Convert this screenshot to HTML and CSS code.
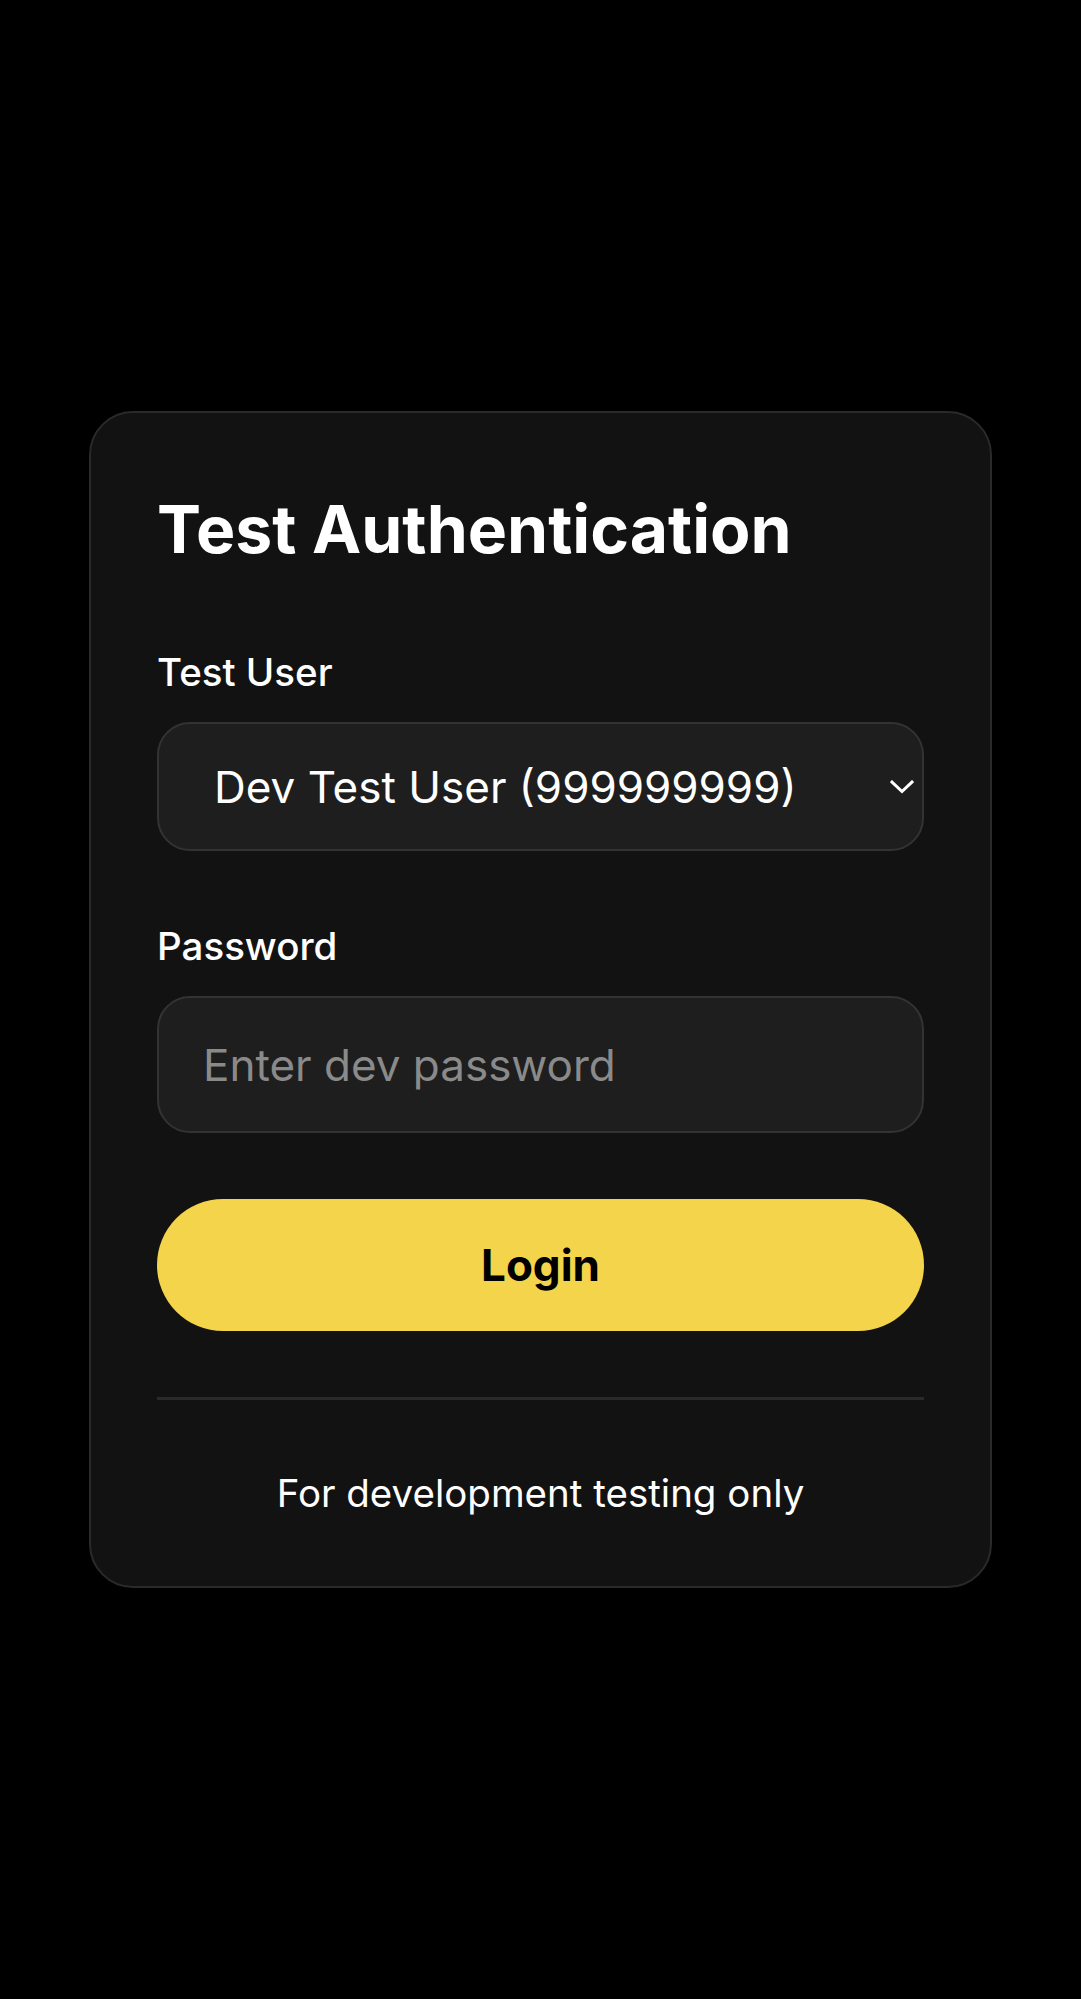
FILE: index.html
```html
<!DOCTYPE html>
<html lang="en">
<head>
<meta charset="utf-8">
<title>Test Authentication</title>
<link rel="stylesheet" href="styles.css">
</head>
<body>
<main class="card">
  <h1 class="title">Test Authentication</h1>
  <label class="label" for="user">Test User</label>
  <div class="select-wrap">
    <select id="user" class="field select">
      <option>Dev Test User (999999999)</option>
    </select>
    <svg class="chevron" width="24" height="14" viewBox="0 0 24 14" aria-hidden="true">
      <path d="M2 2 L12 11.5 L22 2" fill="none" stroke="#fff" stroke-width="3" stroke-linecap="square"/>
    </svg>
  </div>
  <label class="label label-pass" for="pass">Password</label>
  <input id="pass" class="field input" type="password" placeholder="Enter dev password">
  <button class="btn" type="button">Login</button>
  <hr class="divider">
  <p class="footer">For development testing only</p>
</main>
</body>
</html>
```
FILE: styles.css
```css
html, body {
  margin: 0;
  padding: 0;
  background: #000;
}
body {
  min-height: 1999px;
  display: flex;
  align-items: center;
  justify-content: center;
  font-family: Inter, "Noto Sans", sans-serif;
  color: #fff;
}
.card {
  box-sizing: border-box;
  width: 903px;
  background: #121212;
  border: 2.75px solid #2a2a2a;
  border-radius: 44px;
  padding: 76px 66px 68px;
  display: flex;
  flex-direction: column;
}
.title {
  margin: 0;
  font-size: 66px;
  line-height: 80px;
  font-weight: 700;
}
.label {
  display: block;
  margin-top: 78px;
  font-size: 38.5px;
  line-height: 50px;
  font-weight: 500;
}
.label-pass {
  margin-top: 70px;
}
.select-wrap {
  position: relative;
  margin-top: 25px;
}
.field {
  box-sizing: border-box;
  width: 100%;
  background: #1e1e1e;
  border: 2.75px solid #333;
  border-radius: 33px;
  color: #fff;
  font-family: Inter, "Noto Sans", sans-serif;
  font-size: 44px;
  outline: none;
  margin: 0;
  display: block;
}
.select {
  height: 129px;
  padding: 0 60px 0 55px;
  -webkit-appearance: none;
  appearance: none;
}
.chevron {
  position: absolute;
  right: 10px;
  top: 58px;
}
.input {
  margin-top: 25px;
  height: 137px;
  padding: 0 44px;
}
.input::placeholder {
  color: #8a8a8a;
}
.btn {
  margin-top: 66px;
  height: 132px;
  border: 0;
  border-radius: 66px;
  background: #f4d44a;
  color: #000;
  font-family: Inter, "Noto Sans", sans-serif;
  font-size: 44px;
  font-weight: 700;
}
.divider {
  margin: 66px 0 0;
  border: 0;
  height: 2.75px;
  background: #2a2a2a;
}
.footer {
  margin: 68px 0 0;
  text-align: center;
  font-size: 38.5px;
  line-height: 50px;
}
```
